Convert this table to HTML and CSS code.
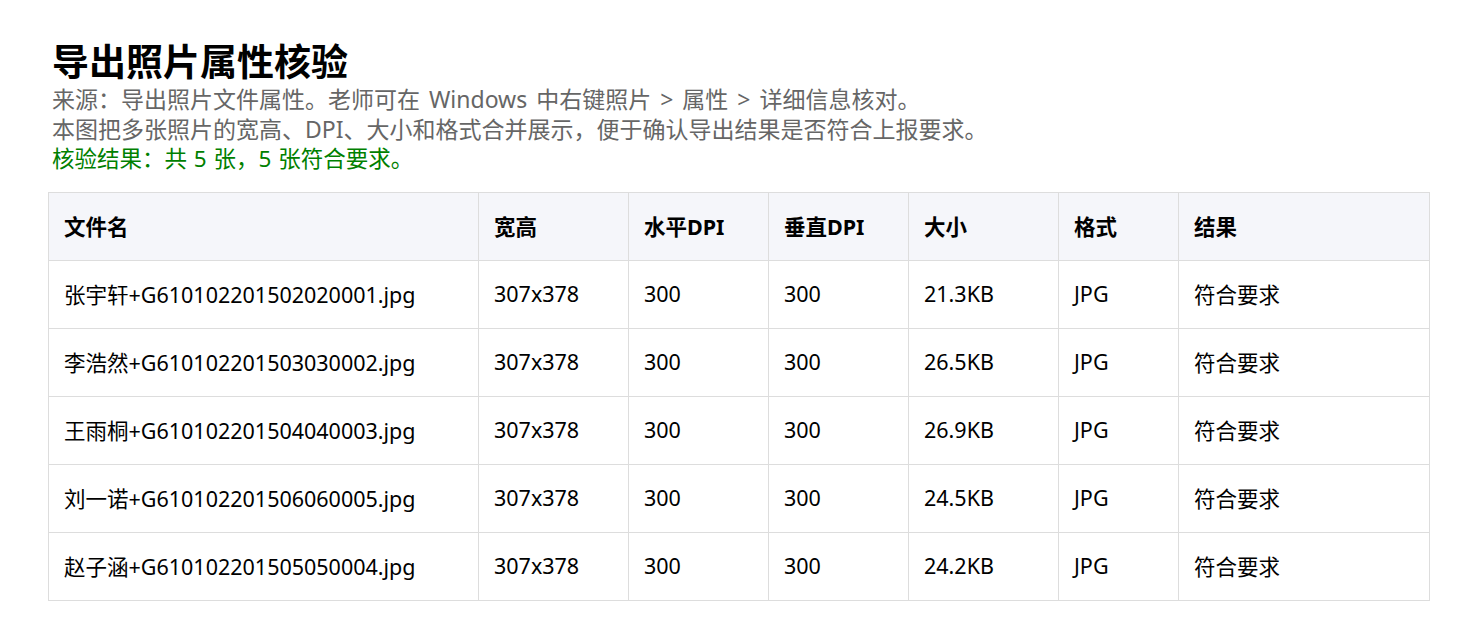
FILE: index.html
```html
<!DOCTYPE html>
<html lang="zh-CN">
<head>
<meta charset="utf-8">
<title>导出照片属性核验</title>
<link rel="stylesheet" href="styles.css">
</head>
<body>
<main class="page">
  <header class="intro">
    <h1 class="title">导出照片属性核验</h1>
    <p class="note note-source">来源：导出照片文件属性。老师可在 Windows 中右键照片 &gt; 属性 &gt; 详细信息核对。</p>
    <p class="note">本图把多张照片的宽高、DPI、大小和格式合并展示，便于确认导出结果是否符合上报要求。</p>
    <p class="result">核验结果：共 5 张，5 张符合要求。</p>
  </header>
  <table class="grid">
    <colgroup>
      <col class="c-name"><col class="c-size"><col class="c-dpi"><col class="c-dpi"><col class="c-kb"><col class="c-fmt"><col class="c-res">
    </colgroup>
    <thead>
      <tr><th>文件名</th><th>宽高</th><th>水平DPI</th><th>垂直DPI</th><th>大小</th><th>格式</th><th>结果</th></tr>
    </thead>
    <tbody>
      <tr><td>张宇轩+G610102201502020001.jpg</td><td>307x378</td><td>300</td><td>300</td><td>21.3KB</td><td>JPG</td><td>符合要求</td></tr>
      <tr><td>李浩然+G610102201503030002.jpg</td><td>307x378</td><td>300</td><td>300</td><td>26.5KB</td><td>JPG</td><td>符合要求</td></tr>
      <tr><td>王雨桐+G610102201504040003.jpg</td><td>307x378</td><td>300</td><td>300</td><td>26.9KB</td><td>JPG</td><td>符合要求</td></tr>
      <tr><td>刘一诺+G610102201506060005.jpg</td><td>307x378</td><td>300</td><td>300</td><td>24.5KB</td><td>JPG</td><td>符合要求</td></tr>
      <tr><td>赵子涵+G610102201505050004.jpg</td><td>307x378</td><td>300</td><td>300</td><td>24.2KB</td><td>JPG</td><td>符合要求</td></tr>
    </tbody>
  </table>
</main>
</body>
</html>
```

FILE: styles.css
```css
html, body {
  margin: 0;
  padding: 0;
  background: #ffffff;
}

body {
  font-family: "Noto Sans", "Noto Sans CJK SC", sans-serif;
  color: #000000;
}

.page {
  padding: 38px 48px 0 48px;
}

.intro {
  padding-left: 4px;
}

.title {
  margin: 0;
  font-size: 37px;
  line-height: 47px;
  font-weight: 700;
}

.note,
.result {
  margin: 0;
  font-size: 23px;
  line-height: 29.5px;
  color: #666666;
  word-spacing: 1px;
}

.note-source {
  word-spacing: 3px;
}

.result {
  color: #008000;
  font-size: 22.5px;
}

.grid {
  margin-top: 18px;
  width: 1381px;
  table-layout: fixed;
  border-collapse: collapse;
  font-size: 21.5px;
}

.c-name { width: 430px; }
.c-size { width: 150px; }
.c-dpi { width: 140px; }
.c-kb { width: 150px; }
.c-fmt { width: 120px; }
.c-res { width: 251px; }

.grid th,
.grid td {
  border: 1px solid #dddddd;
  height: 65px;
  padding: 0 15px 2px 15px;
  text-align: left;
  vertical-align: middle;
  white-space: nowrap;
}

.grid th {
  background: #f5f6fa;
  font-weight: 700;
}
```
